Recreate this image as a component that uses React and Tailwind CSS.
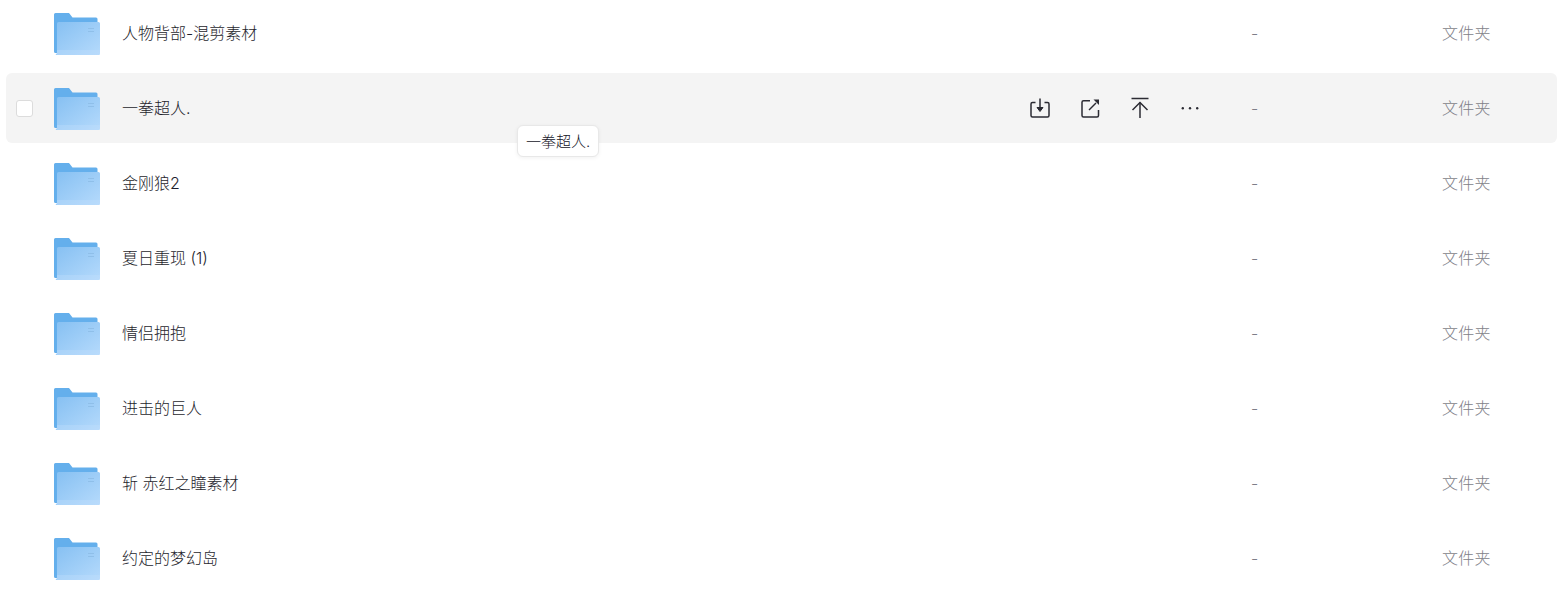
import React from 'react';

const rows = [
  '人物背部-混剪素材',
  '一拳超人.',
  '金刚狼2',
  '夏日重现 (1)',
  '情侣拥抱',
  '进击的巨人',
  '斩 赤红之瞳素材',
  '约定的梦幻岛',
];

const FolderIcon = () => (
  <svg width="46" height="42" viewBox="0 0 46 42" className="mt-[2px] shrink-0">
    <defs>
      <linearGradient id="folderFront" x1="0" y1="0" x2="1" y2="1">
        <stop offset="0" stopColor="#86c0f2" />
        <stop offset="1" stopColor="#b5dafc" />
      </linearGradient>
    </defs>
    <path d="M0 1.500A1.500 1.500 0 0 1 1.500 0H15l3.500 4.500H42A1.500 1.500 0 0 1 43.500 6V40H1.500A1.500 1.500 0 0 1 0 38.500Z" fill="#64afec" />
    <path d="M3 10.500A1.500 1.500 0 0 1 4.500 9H44.500A1.500 1.500 0 0 1 46 10.500V40.500A1.500 1.500 0 0 1 44.500 42H1.500L3 40Z" fill="url(#folderFront)" />
    <rect x="3" y="37" width="43" height="5" fill="#c2e0fb" opacity="0.35" />
    <rect x="34" y="15" width="6" height="1" fill="#8fbfe9" />
    <rect x="34" y="18" width="6" height="1" fill="#8fbfe9" />
  </svg>
);

const ActionIcons = () => (
  <div className="absolute left-[1022px] top-[23px] flex gap-[26px] text-[#2b2b33]">
    <svg width="24" height="24" viewBox="0 0 24 24" fill="none" stroke="currentColor" strokeWidth="1.500">
      <path d="M7.500 6.500H4.500A1.500 1.500 0 0 0 3 8v11.500A1.500 1.500 0 0 0 4.500 21h15a1.500 1.500 0 0 0 1.500-1.500V8a1.500 1.500 0 0 0-1.500-1.500h-3" />
      <path d="M12 2.500V13" />
      <path d="M9 11.500h6L12 15.500Z" fill="currentColor" strokeWidth="1" />
    </svg>
    <svg width="24" height="24" viewBox="0 0 24 24" fill="none" stroke="currentColor" strokeWidth="1.500">
      <path d="M12 4.800H5.500A1.500 1.500 0 0 0 4 6.300V19.500A1.500 1.500 0 0 0 5.500 21h13.500a1.500 1.500 0 0 0 1.500-1.500V14" />
      <path d="M11 14L18 7" />
      <path d="M15.500 3.500L21 3.500 21 9Z" fill="currentColor" stroke="none" />
    </svg>
    <svg width="24" height="24" viewBox="0 0 24 24" fill="none" stroke="currentColor" strokeWidth="1.500">
      <path d="M3.500 2.500h17" />
      <path d="M12 6.500V22" />
      <path d="M4.500 14L12 6.500 19.500 14" />
    </svg>
    <svg width="24" height="24" viewBox="0 0 24 24" fill="currentColor">
      <circle cx="4.800" cy="12.300" r="1.200" />
      <circle cx="12" cy="12.300" r="1.200" />
      <circle cx="19.200" cy="12.300" r="1.200" />
    </svg>
  </div>
);

const Row = ({ name, active }) => (
  <div className={`relative flex h-[70px] items-center rounded-md ${active ? 'bg-[#f4f4f4]' : ''}`}>
    <div className="flex w-[48px] shrink-0 pl-[10px]">
      {active && <div className="h-[17px] w-[17px] rounded-[3px] border border-[#dcdcdc] bg-white" />}
    </div>
    <FolderIcon />
    <div className="-mt-[1px] ml-[22px] w-[1129px] shrink-0 text-[16px] font-light text-[#1e1e2c]">{name}</div>
    <div className="-mt-[1px] w-[191px] shrink-0 text-[16px] font-light text-[#7e7e88]">-</div>
    <div className="-mt-[1px] text-[16px] font-light tracking-[0.3px] text-[#7e7e88]">文件夹</div>
    {active && <ActionIcons />}
    {active && (
      <div className="absolute left-[511px] top-[52px] z-10 flex h-[32px] items-center rounded-md border border-[#e8e8e8] bg-white px-2 pt-[2px] text-[15px] font-light text-[#14141f] shadow-[0_1px_4px_rgba(0,0,0,0.06)]">
        一拳超人.
      </div>
    )}
  </div>
);

export default function App() {
  return (
    <div className="h-[596px] overflow-hidden bg-white font-['Inter','Noto_Sans_CJK_SC',sans-serif]">
      <div className="-mt-[2px] flex flex-col gap-[5px] pl-[6px]">
        {rows.map((name, i) => (
          <Row key={name} name={name} active={i === 1} />
        ))}
      </div>
    </div>
  );
}
